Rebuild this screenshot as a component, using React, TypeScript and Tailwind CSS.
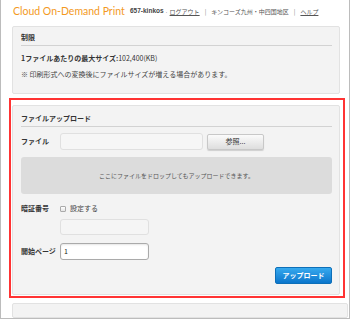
import React from 'react';

const jp = { fontFamily: '"Noto Sans CJK JP", "Liberation Sans", sans-serif' };

export default function App() {
  return (
    <div className="w-[350px] h-[320px] overflow-hidden bg-white" style={jp}>
      <div className="h-[319px] border-x border-b border-[#bcbcbc] flex flex-col overflow-hidden">
        {/* header */}
        <div className="flex items-center h-[22px] pl-[12px] pt-[1px] whitespace-nowrap">
          <span className="shrink-0 w-[117px] text-[10.5px] leading-none text-[#f39a1e]" style={{ fontFamily: 'Lato, "Liberation Sans", sans-serif' }}>
            Cloud On-Demand Print
          </span>
          <div className="shrink-0 flex items-center gap-[5px] text-[6px] leading-none text-[#555]">
            <span className="flex items-center gap-[2px]">
              <span className="font-bold text-[#444] text-[6.5px]" style={{ fontFamily: '"Liberation Sans", sans-serif' }}>657-kinkos</span>
              <span style={{ fontFamily: '"Liberation Sans", sans-serif' }}>·</span>
              <span className="underline">ログアウト</span>
            </span>
            <span className="text-[#888]">|</span>
            <span>キンコーズ九州・中四国地区</span>
            <span className="text-[#888]">|</span>
            <span className="underline">ヘルプ</span>
          </div>
        </div>

        {/* 制限 */}
        <div className="ml-[11px] w-[328px] mt-[4px] h-[68px] rounded-[2px] border border-[#e2e2e2] bg-[#f3f3f3] pl-[8px] pr-[7px] pt-[7px]">
          <div className="text-[7px] font-bold text-[#333] leading-none pb-[4px] border-b border-[#d2d2d2]">制限</div>
          <div className="mt-[9px] text-[7px] leading-none text-[#333]">
            <span className="font-bold">1ファイルあたりの最大サイズ:</span>102,400(KB)
          </div>
          <div className="mt-[9px] text-[7px] leading-none text-[#444]">※ 印刷形式への変換後にファイルサイズが増える場合があります。</div>
        </div>

        {/* upload */}
        <div className="ml-[8px] w-[336px] mt-[4px] border-2 border-[#f33] pl-[1px] pt-[5px] pb-[1px]">
          <div className="w-[328px] rounded-[2px] border border-[#e2e2e2] bg-[#f3f3f3] h-[190px] pl-[8px] pr-[7px] pt-[9px] flex flex-col">
            <div className="text-[7px] font-bold text-[#333] leading-none pb-[4px] border-b border-[#d2d2d2]">ファイルアップロード</div>

            <div className="mt-[6px] flex items-center h-[17px]">
              <span className="w-[39px] text-[7px] font-bold text-[#333]">ファイル</span>
              <div className="w-[143px] h-[17px] rounded-[3px] border border-[#e0e0e0] bg-[#f6f6f6]" />
              <div className="ml-[4px] w-[57px] h-[16px] rounded-[2px] border border-[#c8c8c8] bg-gradient-to-b from-[#fbfbfb] to-[#dedede] shadow-[0_1px_1px_rgba(0,0,0,0.15)] flex items-center justify-center text-[7px] text-[#333]">
                参照...
              </div>
            </div>

            <div className="mt-[7px] h-[37px] rounded-[3px] bg-[#dcdcdc] flex items-center justify-center text-[6px] text-[#555]">
              ここにファイルをドロップしてもアップロードできます。
            </div>

            <div className="mt-[10px] flex items-center h-[9px]">
              <span className="w-[39px] text-[7px] font-bold text-[#333]">暗証番号</span>
              <span className="w-[6px] h-[6px] rounded-[1px] border border-[#aaa] bg-gradient-to-b from-white to-[#e4e4e4]" />
              <span className="ml-[4px] text-[7px] text-[#444]">設定する</span>
            </div>

            <div className="mt-[6px] ml-[39px] w-[89px] h-[16px] rounded-[3px] border border-[#e0e0e0] bg-[#f5f5f5]" />

            <div className="mt-[8px] flex items-center h-[17px]">
              <span className="w-[39px] text-[7px] font-bold text-[#333]">開始ページ</span>
              <div className="w-[89px] h-[17px] rounded-[3px] border border-[#aaa] bg-white flex items-center px-[3px] text-[7px] text-[#222] shadow-[inset_0_1px_2px_rgba(0,0,0,0.1)]">
                1
              </div>
            </div>

            <div className="mt-[7px] flex justify-end">
              <div className="w-[57px] h-[17px] rounded-[2px] border border-[#0d6fb8] bg-gradient-to-b from-[#36a9ee] to-[#0a76cc] flex items-center justify-center text-[7px] font-bold text-white">
                アップロード
              </div>
            </div>
          </div>
        </div>

        <div className="ml-[11px] w-[336px] mt-[5px] flex-1 rounded-[2px] border border-[#e2e2e2] bg-[#f3f3f3]" />
      </div>
    </div>
  );
}
